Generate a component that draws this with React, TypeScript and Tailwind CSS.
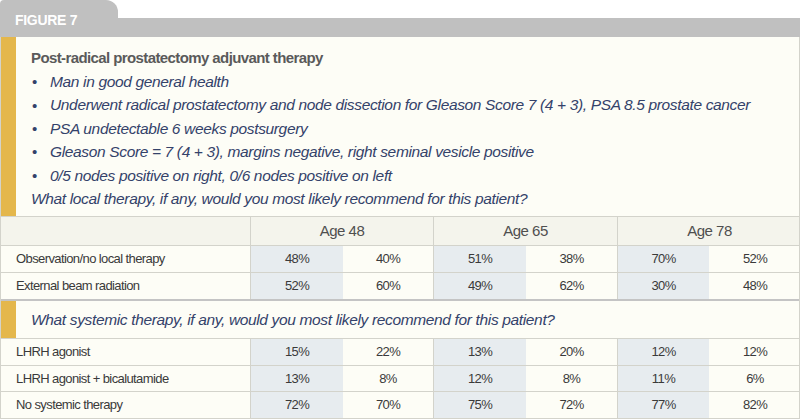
import React from 'react';

// Datos de la figura
const bullets = [
  'Man in good general health',
  'Underwent radical prostatectomy and node dissection for Gleason Score 7 (4 + 3), PSA 8.5 prostate cancer',
  'PSA undetectable 6 weeks postsurgery',
  'Gleason Score = 7 (4 + 3), margins negative, right seminal vesicle positive',
  '0/5 nodes positive on right, 0/6 nodes positive on left',
];

const localRows: [string, string[]][] = [
  ['Observation/no local therapy', ['48%', '40%', '51%', '38%', '70%', '52%']],
  ['External beam radiation', ['52%', '60%', '49%', '62%', '30%', '48%']],
];

const systemicRows: [string, string[]][] = [
  ['LHRH agonist', ['15%', '22%', '13%', '20%', '12%', '12%']],
  ['LHRH agonist + bicalutamide', ['13%', '8%', '12%', '8%', '11%', '6%']],
  ['No systemic therapy', ['72%', '70%', '75%', '72%', '77%', '82%']],
];

const grid = 'grid grid-cols-[250px_92px_91px_92px_92px_91px_92px]';
const italicText = 'italic text-[15.5px] tracking-[-0.35px] text-[#34426a]';

function DataRow({ label, values, h }: { label: string; values: string[]; h: string }) {
  return (
    <div className={`${grid} ${h} border-b border-[#d3d3cb] text-[13px] tracking-[-0.6px] text-[#3a3a3a]`}>
      <div className="flex items-center pl-[15px] border-r border-[#d3d3cb]">{label}</div>
      {values.map((v, i) => (
        <div
          key={i}
          className={`flex items-center justify-center ${i % 2 === 0 ? 'bg-[#e7ecef]' : ''} ${
            i === 1 || i === 3 ? 'border-r border-[#d3d3cb]' : ''
          }`}
        >
          {v}
        </div>
      ))}
    </div>
  );
}

export default function App() {
  return (
    <div
      className="w-[800px] h-[419px] bg-white overflow-hidden"
      style={{ fontFamily: '"Liberation Sans", Arial, sans-serif' }}
    >
      {/* Pestaña FIGURE 7 */}
      <div className="flex h-[37px]">
        <div className="w-[118px] h-full bg-[#c0c0c0] rounded-tl-[4px] rounded-tr-[12px] pl-[15px] pt-[10px] text-white font-bold text-[14px] tracking-[-0.3px]">
          FIGURE 7
        </div>
        <div className="flex-1 self-end h-[19px] bg-[#c0c0c0]" />
      </div>

      <div className="bg-[#fdfdf6] border-l border-r border-[#d3d3cb]">
        {/* Caso clínico */}
        <div className="flex h-[180px] border-b border-[#d3d3cb]">
          <div className="w-[15px] bg-[#e4b74c]" />
          <div className="pl-[15px] pt-[11px]">
            <div className="text-[15px] font-bold tracking-[-0.6px] text-[#5a5a5a] leading-[20px]">
              Post-radical prostatectomy adjuvant therapy
            </div>
            <ul className="mt-[2px]">
              {bullets.map((b) => (
                <li key={b} className={`flex h-[23.4px] items-center ${italicText}`}>
                  <span className="w-[19px] pl-[1px] not-italic text-[15px] leading-none">•</span>
                  {b}
                </li>
              ))}
            </ul>
            <div className={`h-[23.4px] flex items-center ${italicText}`}>
              What local therapy, if any, would you most likely recommend for this patient?
            </div>
          </div>
        </div>

        {/* Encabezado de edades */}
        <div className={`${grid} h-[29px] bg-[#f4f4ec] border-b border-[#d3d3cb] text-[15px] tracking-[-0.5px] text-[#4f4f4f]`}>
          <div className="border-r border-[#d3d3cb]" />
          <div className="col-span-2 flex items-center justify-center border-r border-[#d3d3cb]">Age 48</div>
          <div className="col-span-2 flex items-center justify-center border-r border-[#d3d3cb]">Age 65</div>
          <div className="col-span-2 flex items-center justify-center">Age 78</div>
        </div>

        {localRows.map(([label, values]) => (
          <DataRow key={label} label={label} values={values} h="h-[27px]" />
        ))}

        <div className="h-[2px] bg-[#c4c4c4] -mt-[1px]" />

        {/* Terapia sistémica */}
        <div className="flex h-[38px] border-b border-[#d3d3cb]">
          <div className="w-[15px] bg-[#e4b74c]" />
          <div className={`pl-[15px] flex items-center ${italicText}`}>
            What systemic therapy, if any, would you most likely recommend for this patient?
          </div>
        </div>

        {systemicRows.map(([label, values]) => (
          <DataRow key={label} label={label} values={values} h="h-[26.5px]" />
        ))}
      </div>
    </div>
  );
}
